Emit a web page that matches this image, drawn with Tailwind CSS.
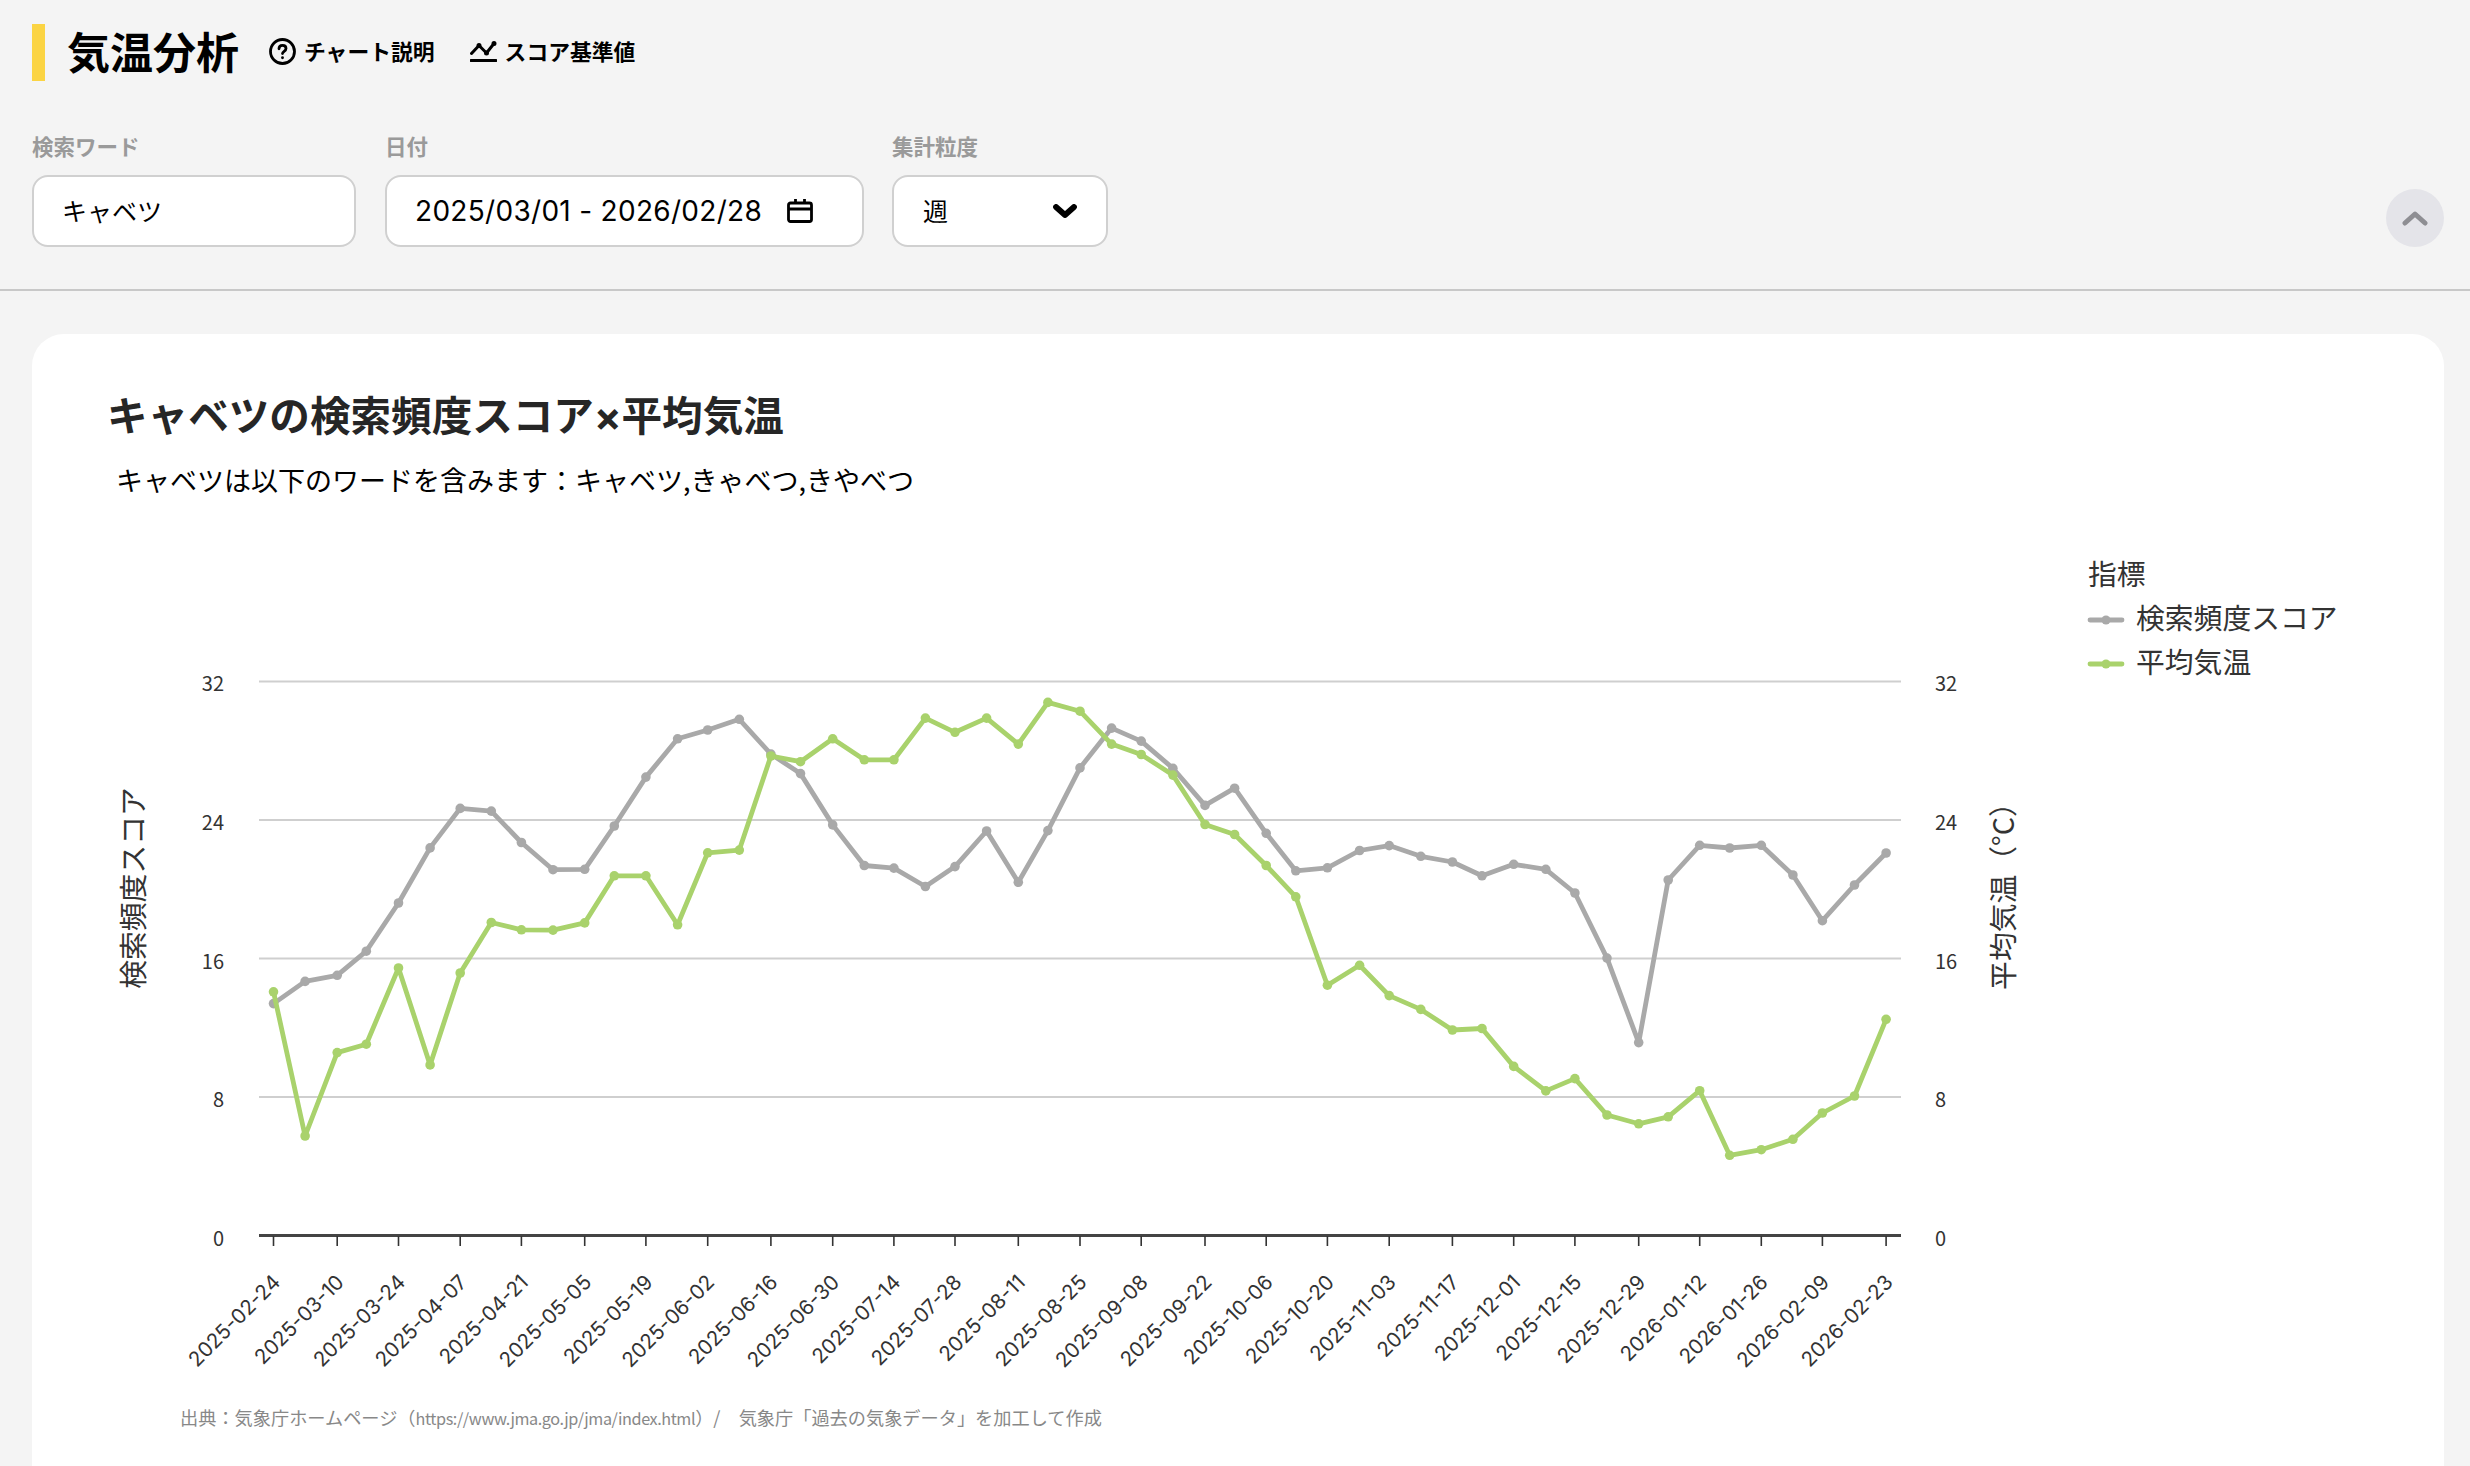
<!DOCTYPE html>
<html lang="ja">
<head>
    <meta charset="UTF-8">
    <title>気温分析</title>
    <script src="https://cdn.jsdelivr.net/npm/@tailwindcss/browser@4"></script>
</head>
<body class="bg-[#f4f4f4] h-[1466px] overflow-hidden font-['Noto_Sans_CJK_JP',sans-serif] text-black">
    <header class="h-[291px] border-b-2 border-[#c8c8c8] pl-8 pr-[26px] pt-6">
        <div class="flex items-center h-[57px]">
            <div class="w-[13px] h-[57px] bg-[#fbd443]"></div>
            <h1 class="ml-[22px] -mt-[4px] text-[43px] leading-none font-bold">気温分析</h1>
            <a class="ml-[30px] -mt-[2px] flex items-center gap-[8px] text-[21.8px] font-bold">
                <svg class="w-[27px] h-[27px]" viewBox="0 0 27 27" fill="none" stroke="#000" stroke-width="2.8" stroke-linecap="round">
                    <circle cx="13.5" cy="13.5" r="12"/>
                    <path d="M10 10.8c0-2.1 1.5-3.4 3.5-3.4s3.5 1.2 3.5 3c0 2.9-3.5 2.8-3.5 5.2"/>
                    <path d="M13.5 19.6v.2"/>
                </svg>
                チャート説明
            </a>
            <a class="ml-[35px] -mt-[2px] flex items-center gap-[8px] text-[21.8px] font-bold">
                <svg class="w-[27px] h-[21px]" viewBox="0 0 27 21" fill="none" stroke="#000" stroke-width="3" stroke-linecap="round" stroke-linejoin="round">
                    <path d="M1.5 12.5L9 4.5l7.5 7.5L24 2.5"/>
                    <circle cx="9" cy="4.5" r="1.6" fill="#000" stroke-width="1.8"/>
                    <circle cx="16.5" cy="12" r="1.6" fill="#000" stroke-width="1.8"/>
                    <circle cx="24" cy="2.5" r="1.6" fill="#000" stroke-width="1.8"/>
                    <path d="M1 19.5h25"/>
                </svg>
                スコア基準値
            </a>
        </div>
        <div class="flex items-end justify-between mt-[56px]">
            <div class="flex gap-[30px]">
                <div>
                    <div class="h-[18px] flex items-center text-[21.5px] font-bold text-[#9a9a9a]">検索ワード</div>
                    <div class="mt-[20px] w-[324px] h-[72px] rounded-2xl border-2 border-[#d0d0d0] bg-white flex items-center pl-[28px] text-[25px]">キャベツ</div>
                </div>
                <div class="-ml-[1px]">
                    <div class="h-[18px] flex items-center text-[21.5px] font-bold text-[#9a9a9a]">日付</div>
                    <div class="mt-[20px] w-[479px] h-[72px] rounded-2xl border-2 border-[#d0d0d0] bg-white flex items-center pl-[28px] text-[28px] tracking-[0.3px] font-['Inter',sans-serif]">
                        <span class="w-[372px]">2025/03/01 - 2026/02/28</span>
                        <svg class="w-[26px] h-[24px]" viewBox="0 0 26 24" fill="none" stroke="#000" stroke-width="2.8">
                            <rect x="1.5" y="4" width="23" height="18.5" rx="2"/>
                            <path d="M1.5 10h23M8.5 0v5M17.5 0v5"/>
                        </svg>
                    </div>
                </div>
                <div class="-ml-[2px]">
                    <div class="h-[18px] flex items-center text-[21.5px] font-bold text-[#9a9a9a]">集計粒度</div>
                    <div class="mt-[20px] w-[216px] h-[72px] rounded-2xl border-2 border-[#d0d0d0] bg-white flex items-center justify-between pl-[29px] pr-[29px] text-[25px]">
                        週
                        <svg class="w-[24px] h-[14px]" viewBox="0 0 24 14" fill="none" stroke="#000" stroke-width="5.8" stroke-linecap="round" stroke-linejoin="round">
                            <path d="M3 3l9 8 9-8"/>
                        </svg>
                    </div>
                </div>
            </div>
            <button class="w-[58px] h-[58px] rounded-full bg-[#e4e4e9] flex items-center justify-center">
                <svg class="w-[26px] h-[16px]" viewBox="0 0 26 16" fill="none" stroke="#8e8e93" stroke-width="5" stroke-linecap="round" stroke-linejoin="round">
                    <path d="M3 13l10-9 10 9"/>
                </svg>
            </button>
        </div>
    </header>
    <main class="pl-8 pr-[26px] pt-[43px]">
        <section class="bg-white rounded-t-[32px] h-[1200px] pt-[50px]">
            <h2 class="h-[60px] pl-[75px] text-[40.6px] leading-[60px] font-bold text-[#262626]">キャベツの検索頻度スコア<span class="font-['Inter',sans-serif] leading-none">×</span>平均気温</h2>
            <p class="mt-[16px] pl-[84px] text-[27px] leading-[40px]">キャベツは以下のワードを含みます：キャベツ,きゃべつ,きやべつ</p>
            <svg id="chart" class="block w-[2412px] h-[870px] mt-[20px]" viewBox="32 520 2412 870"></svg>
            <p class="mt-[13px] pl-[148px] text-[18.2px] leading-[28px] text-[#888]">出典：気象庁ホームページ（<span class="text-[16.2px] tracking-[-0.4px]">https://www.jma.go.jp/jma/index.html</span>）/　気象庁「過去の気象データ」を加工して作成</p>
        </section>
    </main>
    <script>
        const xs = [273.5,305.1,337.2,366.3,398.5,430.1,460.2,491.3,521.4,553,584.7,614.3,645.9,677.6,707.7,739.3,770.9,800.5,832.7,864.3,893.9,925.4,955,986.6,1018.3,1047.9,1080,1111.6,1141.2,1172.9,1205,1234.6,1266.2,1295.8,1327.4,1359.6,1389.2,1420.8,1452.4,1482,1513.7,1545.8,1574.9,1607,1638.7,1668.2,1699.7,1729.7,1761.3,1792.9,1822.4,1854.5,1886.1];
        const score = [1003.6,981.4,975.3,951.2,903,847.9,808.4,811.1,842.5,869.7,869.3,826,777.1,738.8,730,719.3,754.1,773.6,824.9,865.5,868.1,886.5,866.6,831,882.3,830.6,767.9,728.1,741.1,768.3,805.4,788.2,833.3,870.8,867.8,850.5,845.6,856.3,862,875.8,864.3,869.3,893,958.1,1042.6,880,845.3,848,845.3,875,920.7,885,853];
        const temp = [991.8,1136,1052.6,1044.2,968,1064.9,973,922.5,929.8,930.1,922.9,875.8,875.8,924.8,852.8,850.1,756,761.7,738.8,759.8,759.8,718.1,732.3,718.1,744.1,702.4,711.2,744.1,754.5,775.1,824.5,834.5,865.5,896.8,985.2,965.3,995.6,1009.4,1030,1028.5,1066.4,1090.9,1078.6,1115,1123.8,1116.8,1090.7,1155.3,1149.7,1139.3,1113,1096,1019.3];
        const labels = ['2025-02-24','2025-03-10','2025-03-24','2025-04-07','2025-04-21','2025-05-05','2025-05-19','2025-06-02','2025-06-16','2025-06-30','2025-07-14','2025-07-28','2025-08-11','2025-08-25','2025-09-08','2025-09-22','2025-10-06','2025-10-20','2025-11-03','2025-11-17','2025-12-01','2025-12-15','2025-12-29','2026-01-12','2026-01-26','2026-02-09','2026-02-23'];
        const chart = document.getElementById('chart');

        function add(tag, attrs, text) {
            const el = document.createElementNS('http://www.w3.org/2000/svg', tag);
            for (const k in attrs) el.setAttribute(k, attrs[k]);
            if (text !== undefined) el.textContent = text;
            chart.appendChild(el);
            return el;
        }

        // grid + y axis labels
        [[681.4,'32'],[819.9,'24'],[958.5,'16'],[1097,'8'],[1235.5,'0']].forEach(([y, t]) => {
            if (t !== '0') add('line', {x1:259, x2:1901, y1:y, y2:y, stroke:'#cfcfcf', 'stroke-width':2});
            add('text', {x:224, y:y+10, 'text-anchor':'end', 'font-size':20, fill:'#333'}, t);
            add('text', {x:1935, y:y+10, 'font-size':20, fill:'#333'}, t);
        });

        // x axis
        add('line', {x1:259, x2:1901, y1:1235.5, y2:1235.5, stroke:'#444', 'stroke-width':3});
        labels.forEach((t, i) => {
            const x = xs[i * 2];
            add('line', {x1:x, x2:x, y1:1236, y2:1246, stroke:'#333', 'stroke-width':1.6});
            add('text', {transform:`translate(${x + 8} 1283.5) rotate(-45)`, 'text-anchor':'end', 'font-family':'Inter', 'font-size':20.5, fill:'#333'}, t);
        });

        // series
        [[score,'#a9a9a9'],[temp,'#a9d26c']].forEach(([ys, color]) => {
            add('polyline', {points:ys.map((y, i) => xs[i] + ',' + y).join(' '), fill:'none', stroke:color, 'stroke-width':4.8, 'stroke-linejoin':'round'});
            ys.forEach((y, i) => add('circle', {cx:xs[i], cy:y, r:4.8, fill:color}));
        });

        // axis titles
        add('text', {transform:'translate(144 888) rotate(-90)', 'text-anchor':'middle', 'font-size':28.8, fill:'#333'}, '検索頻度スコア');
        add('text', {transform:'translate(2014 889) rotate(-90)', 'text-anchor':'middle', 'font-size':28.8, fill:'#333'}, '平均気温（°C）');

        // legend
        add('text', {x:2088, y:585, 'font-size':28.8, fill:'#333'}, '指標');
        [[620,'#a9a9a9','検索頻度スコア'],[664,'#a9d26c','平均気温']].forEach(([y, color, t]) => {
            add('line', {x1:2090, x2:2122, y1:y, y2:y, stroke:color, 'stroke-width':4.8, 'stroke-linecap':'round'});
            add('circle', {cx:2106, cy:y, r:4.5, fill:color});
            add('text', {x:2136, y:y+9, 'font-size':28.8, fill:'#333'}, t);
        });
    </script>
</body>
</html>
